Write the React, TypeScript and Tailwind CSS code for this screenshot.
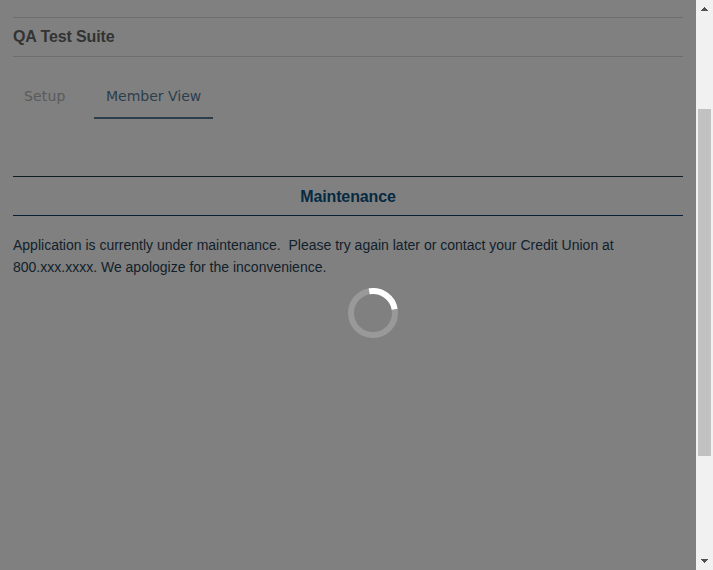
function Header() {
  return (
    <header className="flex h-10 items-center border-y border-[#6d6d6d]">
      <h1 className="text-[16px] leading-6 font-bold tracking-[-0.12px] whitespace-nowrap text-[#333333]">QA Test Suite</h1>
    </header>
  );
}

function Tabs() {
  return (
    <nav className="mt-[17px] flex h-[45px] font-['DejaVu_Sans',sans-serif] text-[14px] whitespace-nowrap">
      <button className="flex w-[81px] pt-[12px] pl-[11px] leading-[20px] tracking-[0.15px] text-[#5a5a5a]">
        <span className="inline-block">Setup</span>
      </button>
      <button className="flex w-[119px] border-b-2 border-[#2c3e4c] pt-[12px] pl-[12px] leading-[20px] text-[#2c3e4c]">
        <span className="inline-block">Member View</span>
      </button>
    </nav>
  );
}

function Spinner() {
  return (
    <svg className="absolute top-[288px] left-[348px] size-[50px]" viewBox="0 0 50 50" fill="none" strokeWidth="6">
      <circle cx="25" cy="25" r="22" stroke="#999999" />
      <path d="M21.18 3.33A22 22 0 0 1 46.67 21.18" stroke="#ffffff" />
    </svg>
  );
}

function Scrollbar() {
  return (
    <aside className="flex w-[17px] flex-col items-center bg-[#f1f1f1]">
      <svg className="h-[17px] w-[17px]" viewBox="0 0 17 17" fill="#505050" shapeRendering="crispEdges">
        <path d="M8 7h1v1h1v1h1v1h1v1H5v-1h1v-1h1v-1h1z" />
      </svg>
      <div className="mt-[92px] mr-[1px] h-[347px] w-[13px] bg-[#c1c1c1]" />
      <svg className="mt-auto h-[17px] w-[17px]" viewBox="0 0 17 17" fill="#505050" shapeRendering="crispEdges">
        <path d="M5 6h7v1h-1v1h-1v1H9v1H8V9H7V8H6V7H5z" />
      </svg>
    </aside>
  );
}

export default function App() {
  return (
    <div className="relative flex h-[570px] w-[713px] overflow-hidden bg-[#808080] font-['Liberation_Sans',Arial,sans-serif]">
      <main className="w-[696px] px-[13px] pt-[17px]">
        <Header />
        <Tabs />
        <h2 className="mt-[57px] flex h-10 items-center justify-center border-y border-t-[#0e1c26] border-b-[#06203a] pt-[2px] text-[16px] leading-6 font-bold tracking-[-0.12px] text-[#052a42]">
          Maintenance
        </h2>
        <p className="mt-[18px] text-[14px] leading-[22px] whitespace-nowrap text-[#11212b]">
          Application is currently under maintenance.&nbsp; Please try again later or contact your Credit Union at
          <br />
          800.xxx.xxxx. We apologize for the inconvenience.
        </p>
      </main>
      <Scrollbar />
      <Spinner />
    </div>
  );
}
